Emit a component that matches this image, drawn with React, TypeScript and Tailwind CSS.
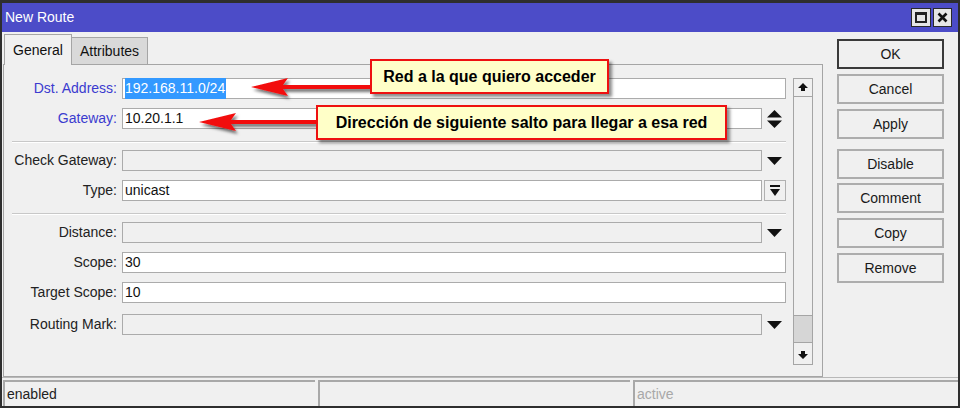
import React from 'react';

type Row = {
  label: string;
  value?: string;
  selected?: boolean;
  blue?: boolean;
  white?: boolean;
  trailing?: 'down' | 'updown' | 'type';
  mt: string;
};

const DownTri: React.FC = () => (
  <svg width="15" height="8" viewBox="0 0 15 8">
    <polygon points="0,0 15,0 7.5,8" fill="#111" />
  </svg>
);

const UpDown: React.FC = () => (
  <svg width="15" height="18" viewBox="0 0 15 18">
    <polygon points="7.5,0 15,7.5 0,7.5" fill="#111" />
    <polygon points="0,10.5 15,10.5 7.5,18" fill="#111" />
  </svg>
);

const TypeButton: React.FC = () => (
  <div className="w-[22px] h-[21px] border border-[#b0b0b0] bg-[#f0f0f0] flex items-center justify-center">
    <svg width="10" height="11" viewBox="0 0 10 11">
      <rect x="0" y="0" width="10" height="2" fill="#111" />
      <polygon points="0,4 10,4 5,11" fill="#111" />
    </svg>
  </div>
);

const rows: Row[] = [
  { label: 'Dst. Address', value: '192.168.11.0/24', selected: true, blue: true, white: true, mt: 'mt-0' },
  { label: 'Gateway', value: '10.20.1.1', blue: true, white: true, trailing: 'updown', mt: 'mt-[9px]' },
];

const rows2: Row[] = [
  { label: 'Check Gateway', trailing: 'down', mt: 'mt-[7px]' },
  { label: 'Type', value: 'unicast', white: true, trailing: 'type', mt: 'mt-[9px]' },
];

const rows3: Row[] = [
  { label: 'Distance', trailing: 'down', mt: 'mt-[7px]' },
  { label: 'Scope', value: '30', white: true, mt: 'mt-[9px]' },
  { label: 'Target Scope', value: '10', white: true, mt: 'mt-[9px]' },
  { label: 'Routing Mark', trailing: 'down', mt: 'mt-[11px]' },
];

const FieldRow: React.FC<{ row: Row }> = ({ row }) => (
  <div className={`flex items-center h-[21px] ${row.mt}`}>
    <div
      className={`w-[114px] shrink-0 text-right pr-[1px] ${row.blue ? 'text-[#3b3bcf]' : 'text-[#222]'}`}
    >
      {row.label}:
    </div>
    <div
      className={`ml-[4px] flex-1 h-[21px] border border-[#ababab] flex items-center px-[2px] text-[#111] ${
        row.white ? 'bg-white' : 'bg-[#f0f0f0]'
      }`}
    >
      {row.selected ? <span className="bg-[#3399ff] text-white pr-px">{row.value}</span> : row.value}
    </div>
    {row.trailing && (
      <div className="w-[24px] shrink-0 flex items-center justify-end">
        {row.trailing === 'down' && (
          <div className="w-[24px] flex justify-center pl-[1px]">
            <DownTri />
          </div>
        )}
        {row.trailing === 'updown' && (
          <div className="w-[24px] flex justify-center pl-[1px]">
            <UpDown />
          </div>
        )}
        {row.trailing === 'type' && <TypeButton />}
      </div>
    )}
  </div>
);

const Separator: React.FC = () => (
  <div className="mt-[12px] ml-[8px] h-[2px] border-t border-[#c8c8c8] border-b border-b-white" />
);

const SideButton: React.FC<{ label: string; mt: string; primary?: boolean }> = ({ label, mt, primary }) => (
  <div
    className={`w-[107px] h-[30px] flex items-center justify-center bg-[#f0f0f0] text-[#1a1a1a] ${mt} ${
      primary ? 'border-2 border-[#3a3a3a]' : 'border-2 border-[#adadad]'
    }`}
  >
    {label}
  </div>
);

const ScrollArrow: React.FC<{ up?: boolean }> = ({ up }) => (
  <svg width="10" height="9" viewBox="0 0 10 9" className={up ? '' : 'rotate-180'}>
    <polygon points="5,0 10,5 7,5 7,8 3,8 3,5 0,5" fill="#111" />
  </svg>
);

export default function App() {
  return (
    <div className="relative w-[960px] h-[408px] font-['Liberation_Sans',Arial,sans-serif] text-[14px]">
      <div className="w-[960px] h-[408px] flex flex-col bg-[#f0f0f0] border-2 border-t-[3px] border-[#2e2e2e]">
        {/* title bar */}
        <div className="h-[29px] shrink-0 bg-[#4c4cc8] flex items-center pl-[3px] pr-[6px]">
          <span className="text-white text-[14px]">New Route</span>
          <div className="ml-auto flex gap-[2px]">
            <div className="w-[20px] h-[19px] bg-[#e6e6e6] border border-[#2a2a2a] flex items-center justify-center">
              <div className="w-[12px] h-[11px] border-2 border-[#222] border-t-[3px]" />
            </div>
            <div className="w-[19px] h-[19px] bg-[#e6e6e6] border border-[#2a2a2a] flex items-center justify-center">
              <svg width="11" height="11" viewBox="0 0 11 11">
                <path d="M1.5 1.5 L9.5 9.5 M9.5 1.5 L1.5 9.5" stroke="#111" strokeWidth="2.6" />
              </svg>
            </div>
          </div>
        </div>

        {/* body */}
        <div className="flex flex-1 pl-[1px]">
          <div className="w-[820px] flex flex-col">
            <div className="h-[32px] flex items-end pl-[1px]">
              <div className="w-[68px] h-[31px] border border-b-0 border-[#a5a5a5] bg-[#f0f0f0] relative z-10 -mb-px flex items-center justify-center text-[#111]">
                General
              </div>
              <div className="w-[76px] h-[27px] border border-l-0 border-b-0 border-[#a5a5a5] bg-[#d9d9d9] flex items-center justify-center text-[#111]">
                Attributes
              </div>
            </div>
            <div className="flex-1 border border-[#a5a5a5] flex pt-[13px]">
              <div className="w-[782px] flex flex-col">
                {rows.map((r) => (
                  <FieldRow key={r.label} row={r} />
                ))}
                <Separator />
                {rows2.map((r) => (
                  <FieldRow key={r.label} row={r} />
                ))}
                <Separator />
                {rows3.map((r) => (
                  <FieldRow key={r.label} row={r} />
                ))}
              </div>
              <div className="ml-[7px] w-[20px] h-[287px] border border-[#a5a5a5] bg-[#f0f0f0] flex flex-col">
                <div className="h-[18px] border-b border-[#a5a5a5] flex items-center justify-center">
                  <ScrollArrow up />
                </div>
                <div className="flex-1" />
                <div className="h-[28px] border-y border-[#a5a5a5] bg-[#d6d6d6]" />
                <div className="h-[20px] mt-[1px] flex items-center justify-center">
                  <ScrollArrow />
                </div>
              </div>
            </div>
          </div>

          {/* side buttons */}
          <div className="ml-[14px] pt-[7px] flex flex-col">
            <SideButton label="OK" mt="mt-0" primary />
            <SideButton label="Cancel" mt="mt-[5px]" />
            <SideButton label="Apply" mt="mt-[5px]" />
            <SideButton label="Disable" mt="mt-[10px]" />
            <SideButton label="Comment" mt="mt-[4px]" />
            <SideButton label="Copy" mt="mt-[5px]" />
            <SideButton label="Remove" mt="mt-[5px]" />
          </div>
        </div>

        {/* status bar */}
        <div className="h-[29px] shrink-0 flex gap-[3px] pt-[2px] pl-[1px] border-t border-[#b8b8b8]">
          <div className="w-[312px] border-t-2 border-l-2 border-[#a8a8a8] flex items-center pl-[2px] text-[#222]">
            enabled
          </div>
          <div className="w-[312px] border-t-2 border-l-2 border-[#a8a8a8]" />
          <div className="flex-1 border-t-2 border-l-2 border-[#a8a8a8] flex items-center pl-[2px] text-[#a8a8a8]">
            active
          </div>
        </div>
      </div>

      {/* annotations */}
      <svg className="absolute left-0 top-0 pointer-events-none" width="960" height="408" viewBox="0 0 960 408">
        <defs>
          <filter id="sh" x="-20%" y="-50%" width="140%" height="200%">
            <feDropShadow dx="2" dy="3" stdDeviation="1.5" floodColor="#000" floodOpacity="0.55" />
          </filter>
        </defs>
        <polygon
          points="251,87 288,78 283,85 372,85 372,89 283,89 288,96"
          fill="#f21010"
          filter="url(#sh)"
        />
        <polygon
          points="199,122 236,113 231,120 318,120 318,124 231,124 236,131"
          fill="#f21010"
          filter="url(#sh)"
        />
      </svg>
      <div className="absolute left-[370px] top-[59px] w-[239px] h-[35px] bg-[#ffffc8] border-2 border-[#ee1010] shadow-[3px_3px_3px_rgba(0,0,0,0.45)] flex items-center justify-center font-bold text-black text-[16px]">
        Red a la que quiero acceder
      </div>
      <div className="absolute left-[316px] top-[105px] w-[411px] h-[35px] bg-[#ffffc8] border-2 border-[#ee1010] shadow-[3px_3px_3px_rgba(0,0,0,0.45)] flex items-center justify-center font-bold text-black text-[16px]">
        Dirección de siguiente salto para llegar a esa red
      </div>
    </div>
  );
}
